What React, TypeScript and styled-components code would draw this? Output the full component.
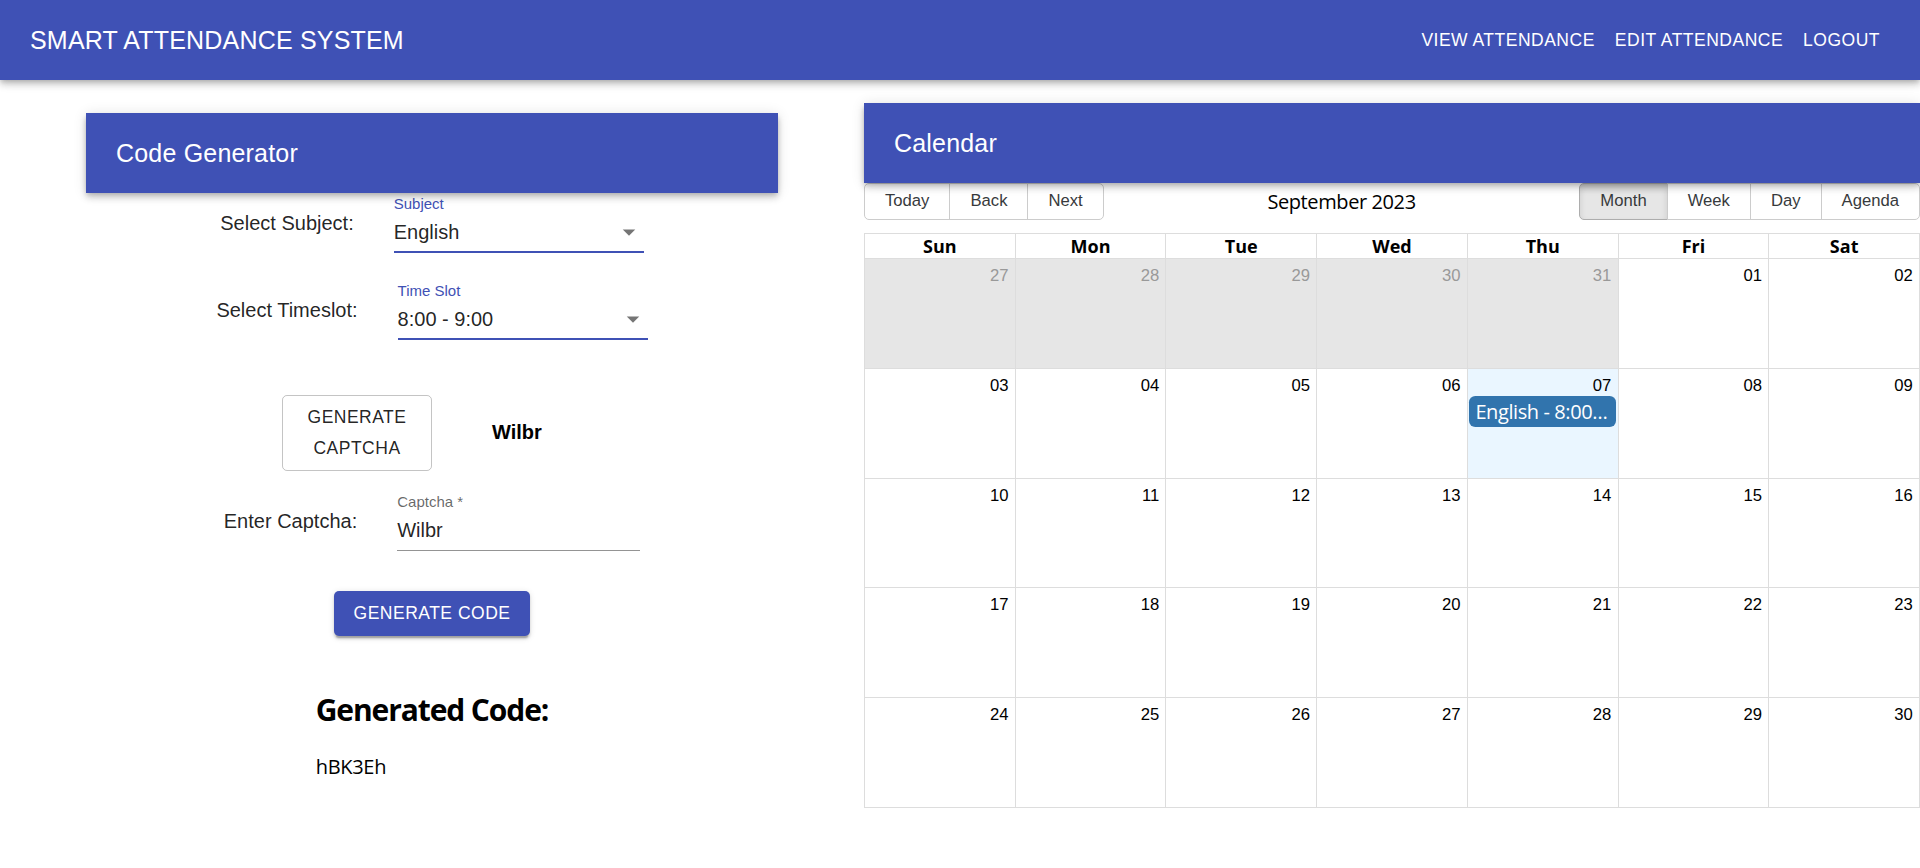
import React from "react";
import styled, { createGlobalStyle, css } from "styled-components";

const PRIMARY = "#3f51b5";
const MUI_FONT = `"Liberation Sans", Arial, Helvetica, sans-serif`;
const BODY_FONT = `"Open Sans", "Noto Sans", sans-serif`;
const SHADOW4 =
  "0px 2.5px 5px -1.25px rgba(0,0,0,0.2), 0px 5px 6.25px 0px rgba(0,0,0,0.14), 0px 1.25px 12.5px 0px rgba(0,0,0,0.12)";
const SHADOW2 =
  "0px 3.75px 1.25px -2.5px rgba(0,0,0,0.2), 0px 2.5px 2.5px 0px rgba(0,0,0,0.14), 0px 1.25px 6.25px 0px rgba(0,0,0,0.12)";

const GlobalStyle = createGlobalStyle`
  html, body { margin: 0; padding: 0; background: #fff; }
  body { font-family: ${BODY_FONT}; font-size: 20px; color: #000; }
  * { box-sizing: border-box; }
  button { font-family: ${MUI_FONT}; }
`;

/* ---------- Top app bar ---------- */
const TopBar = styled.header`
  height: 80px;
  background: ${PRIMARY};
  color: #fff;
  display: flex;
  align-items: center;
  padding: 0 30px;
  box-shadow: ${SHADOW4};
  position: relative;
  z-index: 2;
`;

const Brand = styled.div`
  flex: 1;
  font-family: ${MUI_FONT};
  font-size: 25px;
  letter-spacing: 0.19px;
  line-height: 1.6;
`;

const Nav = styled.nav`
  display: flex;
  align-items: center;
`;

const NavButton = styled.button`
  background: none;
  border: none;
  color: inherit;
  font-size: 17.5px;
  letter-spacing: 0.5px;
  text-transform: uppercase;
  line-height: 1.75;
  padding: 7.5px 10px;
  min-width: 80px;
  cursor: pointer;
`;

/* ---------- Layout ---------- */
const Main = styled.main`
  display: grid;
  grid-template-columns: 864px 1fr;
  align-items: start;
`;

const LeftColumn = styled.section`
  padding: 33px 86px 0;
`;

const RightColumn = styled.section`
  padding-top: 23px;
`;

const PanelBar = styled.div`
  height: 80px;
  background: ${PRIMARY};
  color: #fff;
  display: flex;
  align-items: center;
  padding: 0 30px;
  font-family: ${MUI_FONT};
  font-size: 25px;
  letter-spacing: 0.19px;
  box-shadow: ${SHADOW4};
  position: relative;
  z-index: 1;
`;

/* ---------- Code generator form ---------- */
const Form = styled.div`
  display: flex;
  flex-direction: column;
  align-items: center;
`;

const FieldRow = styled.div<{ $mt: number }>`
  display: flex;
  align-items: center;
  gap: 40px;
  margin-top: ${(p) => p.$mt}px;
`;

const FieldLabel = styled.label`
  font-family: ${MUI_FONT};
  font-size: 20px;
  line-height: 1.5;
  color: rgba(0, 0, 0, 0.87);
`;

const Control = styled.div<{ $w: number }>`
  width: ${(p) => p.$w}px;
  height: 60px;
  display: flex;
  flex-direction: column;
  font-family: ${MUI_FONT};
`;

const ControlLabel = styled.span<{ $focused?: boolean }>`
  height: 20px;
  font-size: 15px;
  line-height: 21px;
  color: ${(p) => (p.$focused ? PRIMARY : "rgba(0,0,0,0.6)")};
`;

const InputLine = styled.div<{ $focused?: boolean }>`
  height: 40px;
  display: flex;
  align-items: center;
  border-bottom: ${(p) =>
    p.$focused ? `2px solid ${PRIMARY}` : "1px solid rgba(0,0,0,0.42)"};
`;

const InputValue = styled.span`
  flex: 1;
  font-size: 20px;
  line-height: 28.75px;
  color: rgba(0, 0, 0, 0.87);
`;

const Caret = styled.svg`
  width: 30px;
  height: 30px;
  fill: rgba(0, 0, 0, 0.54);
  flex: none;
`;

const CaptchaRow = styled.div`
  display: flex;
  align-items: center;
  margin-top: 55px;
`;

const baseButton = css`
  font-family: ${MUI_FONT};
  font-size: 17.5px;
  letter-spacing: 0.5px;
  text-transform: uppercase;
  line-height: 30.6px;
  border-radius: 5px;
  cursor: pointer;
`;

const OutlinedButton = styled.button`
  ${baseButton};
  width: 150px;
  padding: 6.25px 18.75px;
  border: 1px solid rgba(0, 0, 0, 0.23);
  background: transparent;
  color: rgba(0, 0, 0, 0.87);
`;

const CaptchaText = styled.span`
  margin-left: 60px;
  width: 90px;
  font-family: ${MUI_FONT};
  font-weight: bold;
  font-size: 20px;
`;

const ContainedButton = styled.button`
  ${baseButton};
  margin-top: 40px;
  padding: 7.5px 20px;
  border: none;
  background: ${PRIMARY};
  color: #fff;
  box-shadow: ${SHADOW2};
`;

const ResultBlock = styled.div`
  margin-top: 54px;
  display: flex;
  flex-direction: column;
`;

const ResultTitle = styled.h2`
  margin: 0;
  font-family: ${BODY_FONT};
  font-weight: 700;
  font-size: 30px;
  line-height: 40px;
  letter-spacing: -1.1px;
`;

const ResultCode = styled.p`
  margin: 24px 0 0;
  font-size: 20px;
  line-height: 26px;
  letter-spacing: -0.3px;
`;

/* ---------- Calendar ---------- */
const Toolbar = styled.div`
  display: flex;
  align-items: center;
  height: 36px;
  margin-bottom: 14px;
`;

const BtnGroup = styled.div`
  display: flex;
`;

const ToolButton = styled.button<{ $active?: boolean; $pos: "first" | "mid" | "last" }>`
  font-size: 16.67px;
  line-height: normal;
  color: #373a3c;
  background: ${(p) => (p.$active ? "#e6e6e6" : "none")};
  box-shadow: ${(p) => (p.$active ? "inset 0 3.75px 6.25px rgba(0,0,0,0.125)" : "none")};
  border: 1px solid ${(p) => (p.$active ? "#adadad" : "#ccc")};
  padding: 7.5px 20px;
  margin-left: ${(p) => (p.$pos === "first" ? "0" : "-1px")};
  border-radius: ${(p) =>
    p.$pos === "first" ? "5px 0 0 5px" : p.$pos === "last" ? "0 5px 5px 0" : "0"};
  white-space: nowrap;
  cursor: pointer;
`;

const ToolbarLabel = styled.span`
  flex: 1;
  text-align: center;
  padding: 0 12.5px;
  font-size: 20px;
  letter-spacing: -0.4px;
`;

const MonthView = styled.div`
  height: 575px;
  border: 1px solid #ddd;
  display: flex;
  flex-direction: column;
`;

const HeaderRow = styled.div`
  display: flex;
  height: 25px;
  flex: none;
`;

const DayHeader = styled.div`
  flex: 1 1 0;
  min-width: 0;
  text-align: center;
  font-weight: 700;
  font-size: 18px;
  line-height: 24px;
  border-bottom: 1px solid #ddd;
  & + & {
    border-left: 1px solid #ddd;
  }
`;

const WeekRow = styled.div`
  display: flex;
  flex: 1 1 0;
  & + & {
    border-top: 1px solid #ddd;
  }
`;

const DayCell = styled.div<{ $bg: string }>`
  flex: 1 1 0;
  min-width: 0;
  background: ${(p) => p.$bg};
  padding-top: 7px;
  display: flex;
  flex-direction: column;
  & + & {
    border-left: 1px solid #ddd;
  }
`;

const DateNum = styled.span<{ $muted?: boolean }>`
  text-align: right;
  padding-right: 6.25px;
  font-family: ${MUI_FONT};
  font-size: 16.67px;
  line-height: 19px;
  color: ${(p) => (p.$muted ? "#999" : "#000")};
`;

const EventChip = styled.div`
  margin: 1.25px 1.25px 0;
  background: #3174ad;
  color: #fff;
  border-radius: 6.25px;
  padding: 2.5px 6.25px;
  font-size: 20px;
  line-height: 26px;
  letter-spacing: -0.4px;
  white-space: nowrap;
  overflow: hidden;
  text-overflow: ellipsis;
`;

const DropArrow = () => (
  <Caret viewBox="0 0 24 24">
    <path d="M7 10l5 5 5-5z" />
  </Caret>
);

type Day = { n: number; off?: boolean; today?: boolean; event?: string };

const weeks: Day[][] = (() => {
  const rows: Day[][] = [];
  const first: Day[] = [27, 28, 29, 30, 31].map((n) => ({ n, off: true }));
  first.push({ n: 1 }, { n: 2 });
  rows.push(first);
  let d = 3;
  for (let w = 0; w < 4; w++) {
    const row: Day[] = [];
    for (let i = 0; i < 7; i++) {
      const day: Day = { n: d };
      if (d === 7) {
        day.today = true;
        day.event = "English - 8:00 - 9:00";
      }
      row.push(day);
      d++;
    }
    rows.push(row);
  }
  return rows;
})();

const dayNames = ["Sun", "Mon", "Tue", "Wed", "Thu", "Fri", "Sat"];

export default function App() {
  return (
    <>
      <GlobalStyle />
      <TopBar>
        <Brand>SMART ATTENDANCE SYSTEM</Brand>
        <Nav>
          <NavButton>View Attendance</NavButton>
          <NavButton>Edit Attendance</NavButton>
          <NavButton>Logout</NavButton>
        </Nav>
      </TopBar>
      <Main>
        <LeftColumn>
          <PanelBar>Code Generator</PanelBar>
          <Form>
            <FieldRow $mt={0}>
              <FieldLabel>Select Subject:</FieldLabel>
              <Control $w={250}>
                <ControlLabel $focused>Subject</ControlLabel>
                <InputLine $focused>
                  <InputValue>English</InputValue>
                  <DropArrow />
                </InputLine>
              </Control>
            </FieldRow>
            <FieldRow $mt={27}>
              <FieldLabel>Select Timeslot:</FieldLabel>
              <Control $w={250}>
                <ControlLabel $focused>Time Slot</ControlLabel>
                <InputLine $focused>
                  <InputValue>8:00 - 9:00</InputValue>
                  <DropArrow />
                </InputLine>
              </Control>
            </FieldRow>
            <CaptchaRow>
              <OutlinedButton>Generate Captcha</OutlinedButton>
              <CaptchaText>Wilbr</CaptchaText>
            </CaptchaRow>
            <FieldRow $mt={20}>
              <FieldLabel>Enter Captcha:</FieldLabel>
              <Control $w={243}>
                <ControlLabel>Captcha *</ControlLabel>
                <InputLine>
                  <InputValue>Wilbr</InputValue>
                </InputLine>
              </Control>
            </FieldRow>
            <ContainedButton>Generate Code</ContainedButton>
            <ResultBlock>
              <ResultTitle>Generated Code:</ResultTitle>
              <ResultCode>hBK3Eh</ResultCode>
            </ResultBlock>
          </Form>
        </LeftColumn>
        <RightColumn>
          <PanelBar>Calendar</PanelBar>
          <Toolbar>
            <BtnGroup>
              <ToolButton $pos="first">Today</ToolButton>
              <ToolButton $pos="mid">Back</ToolButton>
              <ToolButton $pos="last">Next</ToolButton>
            </BtnGroup>
            <ToolbarLabel>September 2023</ToolbarLabel>
            <BtnGroup>
              <ToolButton $pos="first" $active>Month</ToolButton>
              <ToolButton $pos="mid">Week</ToolButton>
              <ToolButton $pos="mid">Day</ToolButton>
              <ToolButton $pos="last">Agenda</ToolButton>
            </BtnGroup>
          </Toolbar>
          <MonthView>
            <HeaderRow>
              {dayNames.map((d) => (
                <DayHeader key={d}>{d}</DayHeader>
              ))}
            </HeaderRow>
            {weeks.map((row, wi) => (
              <WeekRow key={wi}>
                {row.map((day) => (
                  <DayCell
                    key={`${wi}-${day.n}`}
                    $bg={day.off ? "#e6e6e6" : day.today ? "#eaf6ff" : "#fff"}
                  >
                    <DateNum $muted={day.off}>{String(day.n).padStart(2, "0")}</DateNum>
                    {day.event && <EventChip>{day.event}</EventChip>}
                  </DayCell>
                ))}
              </WeekRow>
            ))}
          </MonthView>
        </RightColumn>
      </Main>
    </>
  );
}
